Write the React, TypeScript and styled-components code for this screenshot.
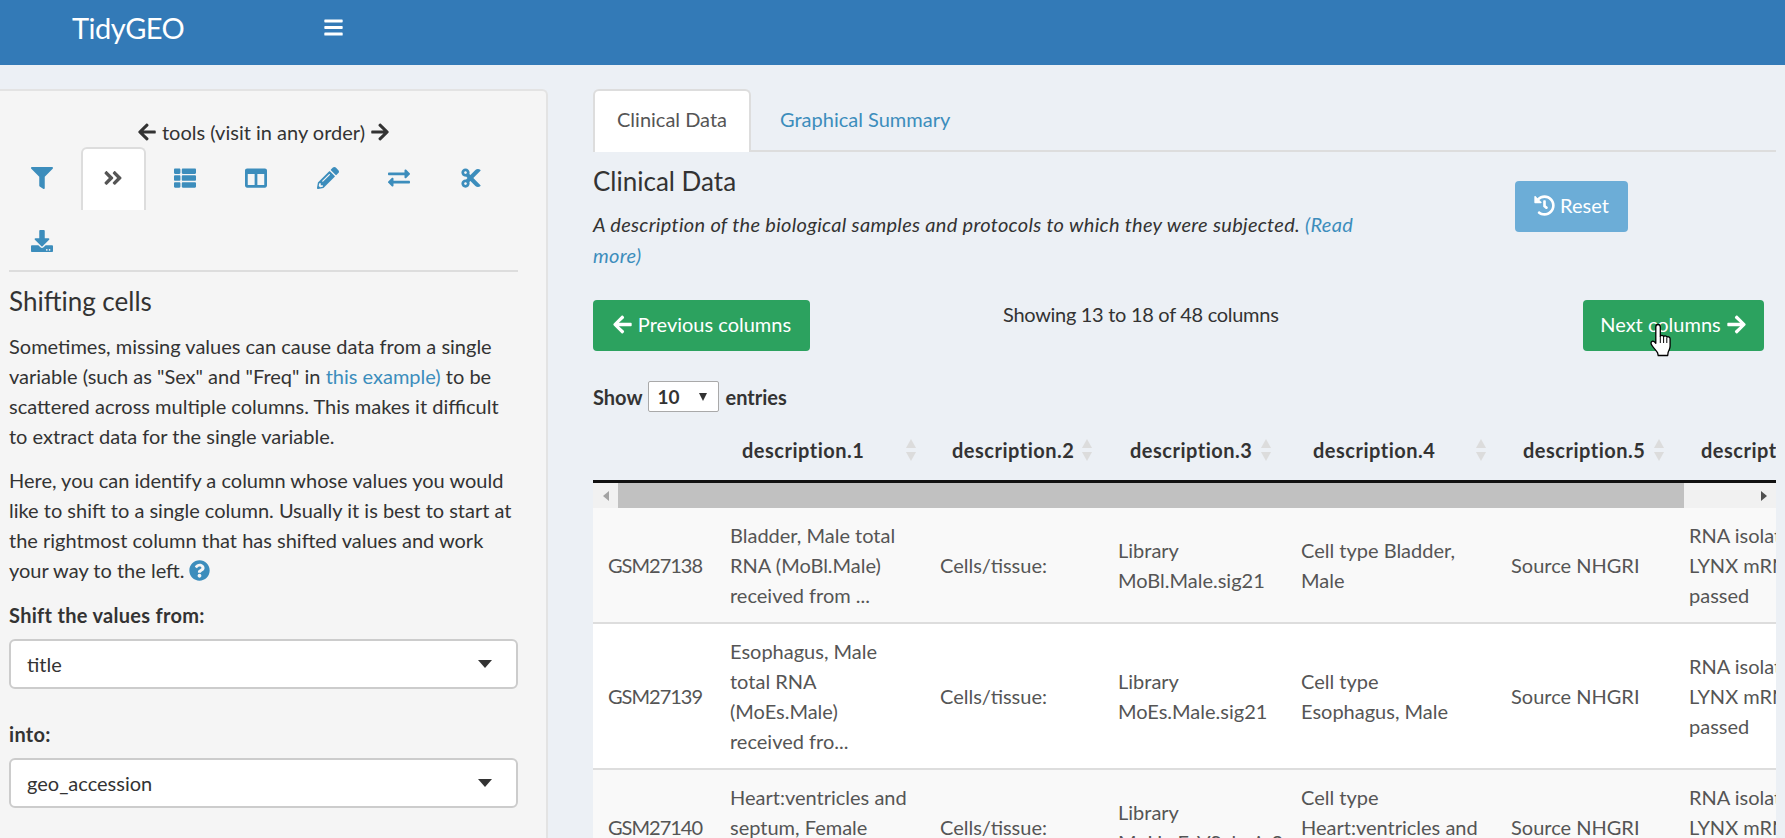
import { FC } from 'react';
import styled, { createGlobalStyle } from 'styled-components';
import {
    FaAngleDoubleRight, FaArrowLeft, FaArrowRight, FaBars, FaColumns, FaCut, FaDownload,
    FaExchangeAlt, FaFilter, FaHistory, FaPencilAlt, FaQuestionCircle, FaThList,
} from 'react-icons/fa';

const Colors = {
    page: '#ecf0f5',
    blue: '#337ab7',
    link: '#3c8dbc',
    text: '#333333',
    cell: '#555555',
    green: '#2ca25f',
    line: '#dddddd',
};

const GlobalStyle = createGlobalStyle`
    html, body {
        margin: 0;
        height: 100%;
        overflow: hidden;
        background: ${Colors.page};
    }
    body {
        font-family: Lato, "Open Sans", sans-serif;
        font-size: 20px;
        color: ${Colors.text};
    }
`;

const TopBar = styled.header`
    height: 65px;
    box-sizing: border-box;
    padding: 0 0 10px 72px;
    display: flex;
    align-items: center;
    background: ${Colors.blue};
    color: #fff;
`;

const Brand = styled.div`
    width: 251px;
    font-size: 29px;
    letter-spacing: -0.5px;
`;

const Columns = styled.div`
    display: flex;
    align-items: flex-start;
    height: 773px;
    overflow: hidden;
`;

const Sidebar = styled.aside`
    width: 548px;
    height: 749px;
    flex: none;
    box-sizing: border-box;
    margin-top: 24px;
    padding: 26px 28px 0 9px;
    background: #f5f5f5;
    border-top: 2px solid #e3e3e3;
    border-right: 2px solid #e3e3e3;
    border-top-right-radius: 6px;
`;

const ToolsTitle = styled.div`
    display: flex;
    justify-content: center;
    align-items: center;
    gap: 5px;
    height: 30px;
`;

const ToolGrid = styled.ul`
    list-style: none;
    margin: 0;
    padding: 0;
    display: grid;
    grid-template-columns: repeat(7, 71.5px);
    grid-template-rows: 63px 60px;
    border-bottom: 2px solid ${Colors.line};
`;

const ToolTab = styled.li<{ $active?: boolean }>`
    width: 65px;
    box-sizing: border-box;
    display: flex;
    justify-content: center;
    padding-top: 18px;
    font-size: 22px;
    color: ${(p) => (p.$active ? Colors.cell : Colors.link)};
    background: ${(p) => (p.$active ? '#fff' : 'transparent')};
    border: 2px solid ${(p) => (p.$active ? Colors.line : 'transparent')};
    border-bottom: 0;
    border-radius: 6px 6px 0 0;
`;

const SideHeading = styled.h4`
    margin: 14px 0 15px;
    font-size: 26px;
    line-height: 30px;
    font-weight: 400;
`;

const Para = styled.p`
    margin: 0 0 14px;
    line-height: 30px;
    white-space: nowrap;
`;

const TextLink = styled.a`
    color: ${Colors.link};
`;

const HelpIcon = styled.span`
    color: ${Colors.link};
    font-size: 21px;
    margin-left: 4px;
    vertical-align: -3px;
`;

const FieldLabel = styled.label`
    display: block;
    height: 30px;
    line-height: 30px;
    font-weight: 700;
    letter-spacing: 0.3px;
    margin: -2px 0 9px;
`;

const SelectBox = styled.div`
    height: 50px;
    box-sizing: border-box;
    margin-bottom: 32px;
    padding: 0 24px 0 16px;
    display: flex;
    align-items: center;
    justify-content: space-between;
    background: #fff;
    border: 2px solid #cccccc;
    border-radius: 6px;
`;

const Caret = styled.span`
    width: 0;
    height: 0;
    border-style: solid;
    border-width: 8px 7.5px 0;
    border-color: ${Colors.text} transparent transparent;
`;

const Main = styled.main`
    flex: 1;
    min-width: 0;
    padding: 24px 9px 0 45px;
`;

const TabStrip = styled.div`
    display: flex;
    height: 63px;
    box-sizing: border-box;
    border-bottom: 2px solid ${Colors.line};
`;

const TabItem = styled.div<{ $active?: boolean }>`
    height: 63px;
    box-sizing: border-box;
    padding: 13px 22px 0;
    line-height: 30px;
    margin-right: 5px;
    color: ${(p) => (p.$active ? Colors.cell : Colors.link)};
    background: ${(p) => (p.$active ? '#fff' : 'transparent')};
    border: 2px solid ${(p) => (p.$active ? Colors.line : 'transparent')};
    border-bottom: 0;
    border-radius: 6px 6px 0 0;
`;

const IntroRow = styled.div`
    display: flex;
    align-items: flex-start;
    height: 148px;
`;

const IntroText = styled.div`
    width: 922px;
    flex: none;
`;

const MainHeading = styled.h4`
    margin: 14px 0 13px;
    font-size: 26px;
    line-height: 30px;
    font-weight: 400;
`;

const IntroPara = styled.p`
    margin: 0;
    line-height: 30.5px;
    font-style: italic;
    letter-spacing: 0.3px;
`;

const Button = styled.button<{ $tone: 'green' | 'blue' }>`
    height: 51px;
    box-sizing: border-box;
    padding: 0 0 3px;
    display: inline-flex;
    align-items: center;
    justify-content: center;
    gap: 5px;
    font: inherit;
    color: #fff;
    border: 0;
    border-radius: 4px;
    background: ${(p) => (p.$tone === 'green' ? Colors.green : '#6cadd7')};
`;

const ResetButton = styled(Button)`
    width: 113px;
    margin-top: 29px;
`;

const PagerRow = styled.div`
    display: flex;
    align-items: flex-start;
    justify-content: space-between;
    padding-right: 12px;
    height: 81px;
`;

const PrevButton = styled(Button)`
    width: 217px;
`;

const NextButton = styled(Button)`
    width: 181px;
    position: relative;
`;

const PagerInfo = styled.div`
    margin: 0 auto 0 193px;
    line-height: 28px;
    letter-spacing: -0.3px;
`;

const Pointer = styled.svg`
    position: absolute;
    left: 67px;
    top: 23px;
    width: 22px;
    height: 34px;
`;

const LengthRow = styled.div`
    display: flex;
    align-items: center;
    gap: 6px;
    height: 31px;
    font-weight: 700;
`;

const LengthSelect = styled.div`
    width: 71px;
    height: 31px;
    box-sizing: border-box;
    padding: 0 11px 0 8px;
    display: flex;
    align-items: center;
    justify-content: space-between;
    background: #fff;
    border: 1px solid #a9a9a9;
    border-radius: 2px;
    font-size: 19px;
`;

const SmallCaret = styled(Caret)`
    border-width: 8px 4.5px 0;
`;

const TableFrame = styled.div`
    width: 1183px;
    overflow: hidden;
`;

const DataTable = styled.table`
    table-layout: fixed;
    width: 1381px;
    border-collapse: separate;
    border-spacing: 0;
`;

const HeadCell = styled.th`
    height: 71px;
    box-sizing: border-box;
    padding: 8px 0 0 27px;
    text-align: left;
    font-weight: 700;
    border-bottom: 3px solid #111;
`;

const HeadInner = styled.div`
    display: flex;
    align-items: center;
    white-space: nowrap;
`;

const HeadLabel = styled.span`
    width: 123px;
    flex: none;
    letter-spacing: 0.5px;
`;

const SortMark = styled.svg<{ $gap: number }>`
    width: 12px;
    height: 22px;
    flex: none;
    margin-left: ${(p) => p.$gap}px;
`;

const ScrollTrack = styled.div`
    display: flex;
    justify-content: space-between;
    height: 25px;
    background: #f1f1f1;
`;

const ScrollArrow = styled.div<{ $right?: boolean }>`
    width: 25px;
    flex: none;
    display: flex;
    align-items: center;
    justify-content: center;
    &::before {
        content: '';
        border-style: solid;
        border-width: 5.5px ${(p) => (p.$right ? '0 5.5px 6px' : '6px 5.5px 0')};
        border-color: transparent ${(p) => (p.$right ? 'transparent' : '#a3a3a3')} transparent ${(p) => (p.$right ? '#505050' : 'transparent')};
    }
`;

const ScrollThumb = styled.div`
    width: 1066px;
    flex: none;
    margin-right: auto;
    background: #c1c1c1;
`;

const BodyRow = styled.tr<{ $odd: boolean }>`
    background: ${(p) => (p.$odd ? '#f9f9f9' : '#fff')};
`;

const BodyCell = styled.td`
    padding: 12px 0 12px 15px;
    line-height: 30px;
    color: ${Colors.cell};
    vertical-align: middle;
    white-space: nowrap;
    overflow: hidden;
    border-bottom: 2px solid ${Colors.line};
    &:first-child {
        letter-spacing: -1px;
    }
`;

const CellLine = styled.span`
    display: block;
`;

const handPath = 'M8 1.5c1.4 0 2.3 1 2.3 2.4v9.3c.5-1 2.9-1.1 3.3.4.6-1 2.8-.9 3.2.6.8-.8 3.3-.5 3.3 1.6v7.2c0 3.4-1.5 4.4-2 6.5l-.4 3H8.2l-.6-2.6C6.5 27.6 1 22.7 1 20c0-1.6 1.8-2.4 3.2-1.4l1.6 1.6V3.9C5.8 2.5 6.7 1.5 8 1.5z';

const widths = [122, 210, 178, 183, 210, 178, 300];

const heads = [
    { label: 'description.1', gap: 40 },
    { label: 'description.2', gap: 6 },
    { label: 'description.3', gap: 7 },
    { label: 'description.4', gap: 39 },
    { label: 'description.5', gap: 7 },
    { label: 'description.6', gap: 7 },
];

const rows = [
    [
        ['GSM27138'],
        ['Bladder, Male total', 'RNA (MoBl.Male)', 'received from ...'],
        ['Cells/tissue:'],
        ['Library', 'MoBl.Male.sig21'],
        ['Cell type Bladder,', 'Male'],
        ['Source NHGRI'],
        ['RNA isolated using', 'LYNX mRNA kit', 'passed'],
    ],
    [
        ['GSM27139'],
        ['Esophagus, Male', 'total RNA', '(MoEs.Male)', 'received fro...'],
        ['Cells/tissue:'],
        ['Library', 'MoEs.Male.sig21'],
        ['Cell type', 'Esophagus, Male'],
        ['Source NHGRI'],
        ['RNA isolated using', 'LYNX mRNA kit', 'passed'],
    ],
    [
        ['GSM27140'],
        ['Heart:ventricles and', 'septum, Female', 'total RNA ...'],
        ['Cells/tissue:'],
        ['Library', 'MoHe.FeVSeb.sig21'],
        ['Cell type', 'Heart:ventricles and', 'septum, Female'],
        ['Source NHGRI'],
        ['RNA isolated using', 'LYNX mRNA kit', 'passed'],
    ],
];

const tools = [FaFilter, FaAngleDoubleRight, FaThList, FaColumns, FaPencilAlt, FaExchangeAlt, FaCut, FaDownload];

const Sort: FC<{ gap: number }> = ({ gap }) => (
    <SortMark $gap={gap} viewBox="0 0 12 22">
        <path d="M6 0l5 9H1z" fill="#dcdcdc" />
        <path d="M6 22l5-9H1z" fill="#dcdcdc" />
    </SortMark>
);

const ColGroup: FC = () => (
    <colgroup>
        {widths.map((w, i) => <col key={i} width={w} />)}
    </colgroup>
);

export default function App() {
    return (
        <>
            <GlobalStyle />
            <TopBar>
                <Brand>TidyGEO</Brand>
                <FaBars size={21} />
            </TopBar>
            <Columns>
                <Sidebar>
                    <ToolsTitle><FaArrowLeft size={20} /> tools (visit in any order) <FaArrowRight size={20} /></ToolsTitle>
                    <ToolGrid>
                        {tools.map((Icon, i) => (
                            <ToolTab key={i} $active={i === 1}><Icon /></ToolTab>
                        ))}
                    </ToolGrid>
                    <SideHeading>Shifting cells</SideHeading>
                    <Para>
                        Sometimes, missing values can cause data from a single<br />
                        variable (such as "Sex" and "Freq" in <TextLink>this example)</TextLink> to be<br />
                        scattered across multiple columns. This makes it difficult<br />
                        to extract data for the single variable.
                    </Para>
                    <Para>
                        Here, you can identify a column whose values you would<br />
                        like to shift to a single column. Usually it is best to start at<br />
                        the rightmost column that has shifted values and work<br />
                        your way to the left.<HelpIcon><FaQuestionCircle /></HelpIcon>
                    </Para>
                    <FieldLabel>Shift the values from:</FieldLabel>
                    <SelectBox>title<Caret /></SelectBox>
                    <FieldLabel>into:</FieldLabel>
                    <SelectBox>geo_accession<Caret /></SelectBox>
                </Sidebar>
                <Main>
                    <TabStrip>
                        <TabItem $active>Clinical Data</TabItem>
                        <TabItem>Graphical Summary</TabItem>
                    </TabStrip>
                    <IntroRow>
                        <IntroText>
                            <MainHeading>Clinical Data</MainHeading>
                            <IntroPara>
                                A description of the biological samples and protocols to which they were subjected. <TextLink>(Read<br />more)</TextLink>
                            </IntroPara>
                        </IntroText>
                        <ResetButton $tone="blue"><FaHistory size={21} /> Reset</ResetButton>
                    </IntroRow>
                    <PagerRow>
                        <PrevButton $tone="green"><FaArrowLeft size={21} /> Previous columns</PrevButton>
                        <PagerInfo>Showing 13 to 18 of 48 columns</PagerInfo>
                        <NextButton $tone="green">
                            Next columns <FaArrowRight size={21} />
                            <Pointer viewBox="0 0 22 34">
                                <path d={handPath} fill="#fff" stroke="#000" strokeWidth="1.3" strokeLinejoin="round" />
                                <path d="M10.3 13v7M13.6 14v6M16.8 15v5" stroke="#000" strokeWidth="1" fill="none" />
                            </Pointer>
                        </NextButton>
                    </PagerRow>
                    <LengthRow>Show <LengthSelect>10<SmallCaret /></LengthSelect> entries</LengthRow>
                    <TableFrame>
                        <DataTable>
                            <ColGroup />
                            <thead>
                                <tr>
                                    <HeadCell />
                                    {heads.map((h) => (
                                        <HeadCell key={h.label}>
                                            <HeadInner><HeadLabel>{h.label}</HeadLabel><Sort gap={h.gap} /></HeadInner>
                                        </HeadCell>
                                    ))}
                                </tr>
                            </thead>
                        </DataTable>
                        <ScrollTrack>
                            <ScrollArrow />
                            <ScrollThumb />
                            <ScrollArrow $right />
                        </ScrollTrack>
                        <DataTable>
                            <ColGroup />
                            <tbody>
                                {rows.map((row, r) => (
                                    <BodyRow key={r} $odd={r % 2 === 0}>
                                        {row.map((lines, c) => (
                                            <BodyCell key={c}>
                                                {lines.map((l) => <CellLine key={l}>{l}</CellLine>)}
                                            </BodyCell>
                                        ))}
                                    </BodyRow>
                                ))}
                            </tbody>
                        </DataTable>
                    </TableFrame>
                </Main>
            </Columns>
        </>
    );
}
